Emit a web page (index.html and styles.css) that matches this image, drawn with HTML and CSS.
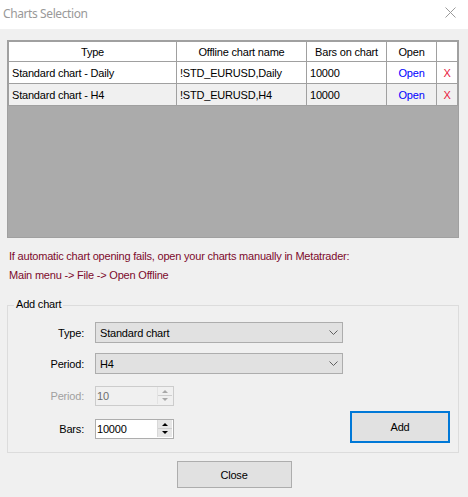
FILE: index.html
```html
<!DOCTYPE html>
<html>
<head>
<meta charset="utf-8">
<link rel="stylesheet" href="styles.css">
</head>
<body>
<div class="window">
  <div class="titlebar">
    <span class="title">Charts Selection</span>
    <svg class="win-close" width="11" height="11" viewBox="0 0 11 11"><path d="M0.5 0.5 L10.5 10.5 M10.5 0.5 L0.5 10.5" stroke="#9a9a9a" stroke-width="1" fill="none"/></svg>
  </div>
  <div class="content">
    <div class="grid">
      <div class="table">
        <div class="row head">
          <div class="cell center">Type</div>
          <div class="cell center">Offline chart name</div>
          <div class="cell center">Bars on chart</div>
          <div class="cell center">Open</div>
          <div class="cell"></div>
        </div>
        <div class="row">
          <div class="cell">Standard chart - Daily</div>
          <div class="cell">!STD_EURUSD,Daily</div>
          <div class="cell">10000</div>
          <div class="cell center link">Open</div>
          <div class="cell center del">X</div>
        </div>
        <div class="row alt">
          <div class="cell">Standard chart - H4</div>
          <div class="cell">!STD_EURUSD,H4</div>
          <div class="cell">10000</div>
          <div class="cell center link">Open</div>
          <div class="cell center del">X</div>
        </div>
      </div>
    </div>
    <p class="msg first">If automatic chart opening fails, open your charts manually in Metatrader:</p>
    <p class="msg">Main menu -&gt; File -&gt; Open Offline</p>
    <div class="group">
      <span class="legend">Add chart</span>
      <div class="field">
        <span class="label">Type:</span>
        <div class="combo"><span>Standard chart</span><svg width="9" height="5" viewBox="0 0 9 5"><path d="M0.5 0.5 L4.5 4.5 L8.5 0.5" stroke="#606060" fill="none"/></svg></div>
      </div>
      <div class="field second">
        <span class="label">Period:</span>
        <div class="combo"><span>H4</span><svg width="9" height="5" viewBox="0 0 9 5"><path d="M0.5 0.5 L4.5 4.5 L8.5 0.5" stroke="#606060" fill="none"/></svg></div>
      </div>
      <div class="lower">
        <div class="lower-left">
          <div class="field">
            <span class="label disabled">Period:</span>
            <div class="numeric disabled">
              <span class="num-text">10</span>
              <div class="spin"><span class="up"></span><span class="down"></span></div>
            </div>
          </div>
          <div class="field bars">
            <span class="label">Bars:</span>
            <div class="numeric">
              <span class="num-text">10000</span>
              <div class="spin"><span class="up"></span><span class="down"></span></div>
            </div>
          </div>
        </div>
        <button class="btn add">Add</button>
      </div>
    </div>
    <div class="footer">
      <button class="btn close">Close</button>
    </div>
  </div>
</div>
</body>
</html>
```

FILE: styles.css
```css
* { box-sizing: border-box; }
html, body {
  margin: 0;
  padding: 0;
  background: #f0f0f0;
}
body {
  font-family: "Liberation Sans", Arial, sans-serif;
  font-size: 11px;
  letter-spacing: -0.2px;
  color: #000;
}
.window {
  width: 468px;
  height: 497px;
  background: #f0f0f0;
}
.titlebar {
  height: 29px;
  background: #fff;
  display: flex;
  align-items: center;
  justify-content: space-between;
  padding: 0 12px 0 3px;
}
.title {
  font-family: "Noto Sans", "Open Sans", sans-serif;
  font-size: 12px;
  letter-spacing: -0.4px;
  color: #999;
  margin-top: -2px;
}
.win-close { margin-top: -5px; }
.content {
  padding: 0 7px;
}
.grid {
  margin-top: 11px;
  width: 452px;
  height: 198px;
  border: 1px solid #a0a0a0;
  background: #ababab;
}
.table {
  border-left: 1px solid #a0a0a0;
  border-top: 1px solid #a0a0a0;
}
.row {
  display: grid;
  grid-template-columns: 168px 130px 80px 50px 21px;
  height: 22px;
  background: #fff;
}
.row.head { height: 20px; }
.row.alt { background: #f0f0f0; }
.cell {
  border-right: 1px solid #a0a0a0;
  border-bottom: 1px solid #a0a0a0;
  padding-left: 3px;
  display: flex;
  align-items: center;
  white-space: nowrap;
  overflow: hidden;
}
.cell.center { justify-content: center; padding-left: 0; }
.link { color: #0000ff; }
.del { color: #e8173c; }
.msg {
  margin: 0 0 0 2px;
  line-height: 19px;
  color: #7d0a2c;
}
.msg.first { margin-top: 9px; }
.group {
  position: relative;
  margin-top: 20px;
  width: 452px;
  border: 1px solid #dcdcdc;
  padding: 16px 0 9px 0;
}
.legend {
  position: absolute;
  top: -8px;
  left: 6px;
  padding: 0 2px;
  line-height: 13px;
  background: #f0f0f0;
}
.field {
  display: flex;
  align-items: center;
}
.field.second { margin-top: 10px; }
.field.bars { margin-top: 13px; }
.label {
  width: 76px;
  margin-right: 11px;
  text-align: right;
}
.label.disabled { color: #a0a0a0; }
.combo {
  width: 248px;
  height: 21px;
  background: #e1e1e1;
  border: 1px solid #adadad;
  display: flex;
  align-items: center;
  justify-content: space-between;
  padding: 0 4px 0 4px;
}
.combo svg { display: block; }
.lower {
  margin-top: 12px;
  display: flex;
  justify-content: space-between;
  align-items: flex-start;
}
.numeric {
  width: 79px;
  height: 20px;
  background: #fff;
  border: 1px solid #adadad;
  display: flex;
  align-items: stretch;
  padding: 0 1px 1px 1px;
}
.numeric.disabled {
  background: #f0f0f0;
  border-color: #cccccc;
  color: #6d6d6d;
}
.num-text {
  flex: 1;
  display: flex;
  align-items: center;
  padding-top: 1px;
}
.spin {
  width: 15px;
  display: flex;
  flex-direction: column;
  background: #e6e6e6;
  border-left: 1px solid #d9d9d9;
}
.spin span {
  flex: 1;
  position: relative;
  border-bottom: 1px solid #cfcfcf;
}
.spin span.down { border-bottom: none; }
.spin span::after {
  content: "";
  position: absolute;
  left: 4px;
  top: 3px;
  border-left: 3px solid transparent;
  border-right: 3px solid transparent;
}
.spin .up::after { border-bottom: 3px solid #000; }
.spin .down::after { border-top: 3px solid #000; top: 2px; }
.numeric.disabled .spin { background: #f0f0f0; border-left-color: #e3e3e3; }
.numeric.disabled .spin .up::after { border-bottom-color: #a8a8a8; }
.numeric.disabled .spin .down::after { border-top-color: #a8a8a8; }
.btn {
  font-family: "Liberation Sans", Arial, sans-serif;
  font-size: 11px;
  letter-spacing: -0.2px;
  color: #000;
  background: #e1e1e1;
  border: 1px solid #adadad;
  padding: 0;
  margin: 0;
}
.btn.add {
  width: 100px;
  height: 32px;
  margin-top: 25px;
  margin-right: 8px;
  border: 2px solid #0078d7;
}
.footer {
  margin-top: 8px;
  display: flex;
  justify-content: center;
}
.btn.close {
  width: 115px;
  height: 27px;
}
```
